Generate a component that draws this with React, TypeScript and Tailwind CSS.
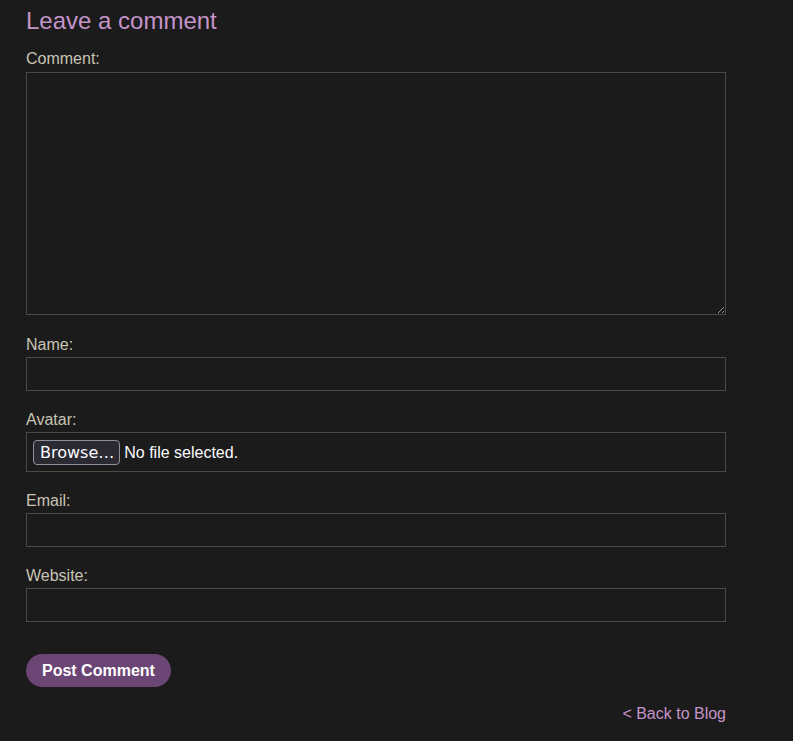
import React from 'react';

const Field = ({ label, first, children }: { label: string; first?: boolean; children: React.ReactNode }) => (
  <div className={first ? 'mt-[20px]' : 'mt-[19px]'}>
    <label className="block text-[16px] leading-[20px] text-[#c9c4b5] mb-[2px]">{label}</label>
    {children}
  </div>
);

const TextInput = () => (
  <input
    type="text"
    className="block w-full h-[34px] bg-[#1b1b1b] border border-[#4a4a4a] outline-none text-[#c9c4b5] px-2"
  />
);

export default function App() {
  return (
    <div className="min-h-[741px] bg-[#1b1b1b] font-['Liberation_Sans',Arial,sans-serif] pt-[7px] pl-[26px]">
      <div className="w-[700px]">
        {/* Heading */}
        <h2 className="text-[24px] leading-[28px] text-[#c594c8] mb-[15px]">Leave a comment</h2>

        <form onSubmit={(e) => e.preventDefault()}>
          <label className="block text-[16px] leading-[18px] text-[#c9c4b5] mb-[4px]">Comment:</label>
          <textarea className="block w-full h-[243px] bg-[#1b1b1b] border border-[#4a4a4a] outline-none text-[#c9c4b5] p-1 resize-y" />

          <Field label="Name:" first>
            <TextInput />
          </Field>

          {/* Avatar file picker */}
          <Field label="Avatar:">
            <div className="flex items-center h-[40px] border border-[#4a4a4a] pl-[6px] pt-[1px]">
              <span className="h-[25px] pl-[6px] pr-[5px] flex items-center rounded-[4px] border border-[#8f8f9d] bg-[#2b2a33] text-[#fbfbfe] text-[16px] font-['DejaVu_Sans',sans-serif]">
                Browse…
              </span>
              <span className="ml-[4px] text-[16px] text-[#fbfbfe]">No file selected.</span>
            </div>
          </Field>

          <Field label="Email:">
            <TextInput />
          </Field>

          <Field label="Website:">
            <TextInput />
          </Field>

          <button
            type="submit"
            className="mt-[32px] h-[33px] px-[16px] rounded-full bg-[#6b4574] text-white font-bold text-[16px]"
          >
            Post Comment
          </button>
        </form>

        <div className="text-right mt-[15px]">
          <a href="#" className="text-[16px] leading-[18px] text-[#c594c8]">&lt; Back to Blog</a>
        </div>
      </div>
    </div>
  );
}
